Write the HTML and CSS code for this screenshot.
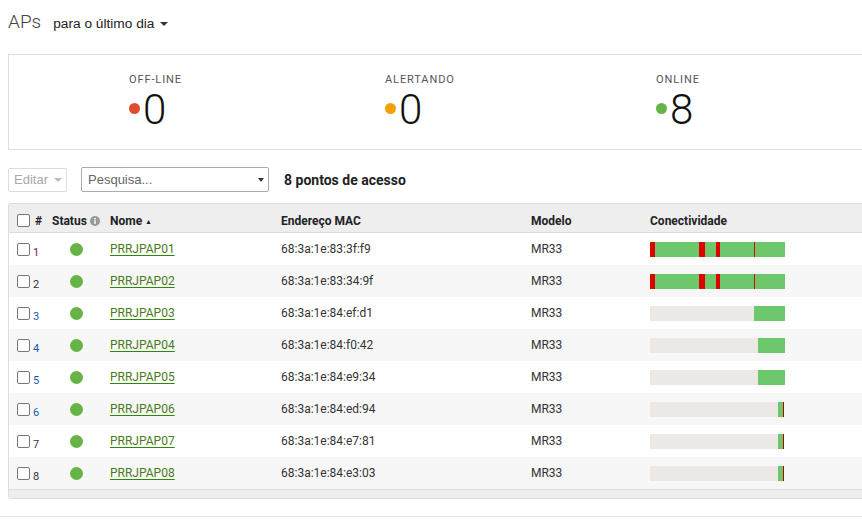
FILE: index.html
```html
<!DOCTYPE html>
<html lang="pt">
<head>
<meta charset="utf-8">
<title>APs</title>
<link rel="stylesheet" href="styles.css">
</head>
<body>
<div class="page">
  <header class="title-row">
    <h1 class="title">APs</h1>
    <div class="period">para o último dia <span class="caret"></span></div>
  </header>

  <section class="stats">
    <div class="stat stat-off">
      <div class="stat-label">OFF-LINE</div>
      <div class="stat-value"><span class="sdot red"></span>0</div>
    </div>
    <div class="stat stat-alert">
      <div class="stat-label">ALERTANDO</div>
      <div class="stat-value"><span class="sdot orange"></span>0</div>
    </div>
    <div class="stat stat-on">
      <div class="stat-label">ONLINE</div>
      <div class="stat-value"><span class="sdot green"></span>8</div>
    </div>
  </section>

  <div class="toolbar">
    <button class="btn-edit" disabled>Editar <span class="caret light"></span></button>
    <div class="search"><span class="placeholder">Pesquisa...</span><span class="caret"></span></div>
    <div class="count">8 pontos de acesso</div>
  </div>

  <div class="table">
    <div class="row head">
      <div class="c-sel"><span class="cb"></span><span class="hash">#</span></div>
      <div class="c-status">Status <svg class="info" width="10" height="10" viewBox="0 0 10 10"><circle cx="5" cy="5" r="5" fill="#999"/><rect x="4.3" y="4.2" width="1.4" height="3.8" fill="#fff"/><circle cx="5" cy="2.7" r="0.85" fill="#fff"/></svg></div>
      <div class="c-name">Nome <span class="sort">&#9650;</span></div>
      <div class="c-mac">Endereço MAC</div>
      <div class="c-model">Modelo</div>
      <div class="c-conn">Conectividade</div>
    </div>

    <div class="row">
      <div class="c-sel"><span class="cb"></span><span class="num visited">1</span></div>
      <div class="c-status"><span class="dot"></span></div>
      <div class="c-name"><a href="#">PRRJPAP01</a></div>
      <div class="c-mac">68:3a:1e:83:3f:f9</div>
      <div class="c-model">MR33</div>
      <div class="c-conn"><div class="bar"><i class="r" style="width:5px"></i><i class="g" style="width:44px"></i><i class="r" style="width:6px"></i><i class="g" style="width:11px"></i><i class="r" style="width:4px"></i><i class="g" style="width:34px"></i><i class="r" style="width:1px"></i><i class="g" style="width:30px"></i></div></div>
    </div>
    <div class="row alt">
      <div class="c-sel"><span class="cb"></span><span class="num">2</span></div>
      <div class="c-status"><span class="dot"></span></div>
      <div class="c-name"><a href="#">PRRJPAP02</a></div>
      <div class="c-mac">68:3a:1e:83:34:9f</div>
      <div class="c-model">MR33</div>
      <div class="c-conn"><div class="bar"><i class="r" style="width:5px"></i><i class="g" style="width:44px"></i><i class="r" style="width:6px"></i><i class="g" style="width:11px"></i><i class="r" style="width:4px"></i><i class="g" style="width:34px"></i><i class="r" style="width:1px"></i><i class="g" style="width:30px"></i></div></div>
    </div>
    <div class="row">
      <div class="c-sel"><span class="cb"></span><span class="num link">3</span></div>
      <div class="c-status"><span class="dot"></span></div>
      <div class="c-name"><a href="#">PRRJPAP03</a></div>
      <div class="c-mac">68:3a:1e:84:ef:d1</div>
      <div class="c-model">MR33</div>
      <div class="c-conn"><div class="bar"><i class="e" style="width:104px"></i><i class="g" style="width:31px"></i></div></div>
    </div>
    <div class="row alt">
      <div class="c-sel"><span class="cb"></span><span class="num link">4</span></div>
      <div class="c-status"><span class="dot"></span></div>
      <div class="c-name"><a href="#">PRRJPAP04</a></div>
      <div class="c-mac">68:3a:1e:84:f0:42</div>
      <div class="c-model">MR33</div>
      <div class="c-conn"><div class="bar"><i class="e" style="width:108px"></i><i class="g" style="width:27px"></i></div></div>
    </div>
    <div class="row">
      <div class="c-sel"><span class="cb"></span><span class="num link">5</span></div>
      <div class="c-status"><span class="dot"></span></div>
      <div class="c-name"><a href="#">PRRJPAP05</a></div>
      <div class="c-mac">68:3a:1e:84:e9:34</div>
      <div class="c-model">MR33</div>
      <div class="c-conn"><div class="bar"><i class="e" style="width:108px"></i><i class="g" style="width:27px"></i></div></div>
    </div>
    <div class="row alt">
      <div class="c-sel"><span class="cb"></span><span class="num link">6</span></div>
      <div class="c-status"><span class="dot"></span></div>
      <div class="c-name"><a href="#">PRRJPAP06</a></div>
      <div class="c-mac">68:3a:1e:84:ed:94</div>
      <div class="c-model">MR33</div>
      <div class="c-conn"><div class="bar"><i class="e" style="width:128px"></i><i class="g" style="width:5px"></i><i class="d" style="width:1px"></i></div></div>
    </div>
    <div class="row">
      <div class="c-sel"><span class="cb"></span><span class="num">7</span></div>
      <div class="c-status"><span class="dot"></span></div>
      <div class="c-name"><a href="#">PRRJPAP07</a></div>
      <div class="c-mac">68:3a:1e:84:e7:81</div>
      <div class="c-model">MR33</div>
      <div class="c-conn"><div class="bar"><i class="e" style="width:128px"></i><i class="g" style="width:5px"></i><i class="d" style="width:1px"></i></div></div>
    </div>
    <div class="row alt">
      <div class="c-sel"><span class="cb"></span><span class="num">8</span></div>
      <div class="c-status"><span class="dot"></span></div>
      <div class="c-name"><a href="#">PRRJPAP08</a></div>
      <div class="c-mac">68:3a:1e:84:e3:03</div>
      <div class="c-model">MR33</div>
      <div class="c-conn"><div class="bar"><i class="e" style="width:128px"></i><i class="g" style="width:5px"></i><i class="d" style="width:1px"></i></div></div>
    </div>
    <div class="table-foot"></div>
  </div>

  <div class="bottom-line"></div>
</div>
</body>
</html>
```

FILE: styles.css
```css
html, body {
  margin: 0;
  padding: 0;
  overflow: hidden;
  background: #fff;
}
body {
  font-family: Roboto, "Liberation Sans", Arial, sans-serif;
  color: #333;
  font-size: 12px;
}
.page {
  padding: 8px 0 0 8px;
}

/* title */
.title-row {
  display: flex;
  align-items: baseline;
  height: 28px;
}
.title {
  margin: 0;
  font-size: 19px;
  font-weight: 300;
  color: #444;
  line-height: 28px;
}
.period {
  margin-left: 12px;
  font-family: "Liberation Sans", Arial, sans-serif;
  font-size: 13.7px;
  color: #222;
  display: flex;
  align-items: center;
}
.caret {
  display: inline-block;
  width: 0;
  height: 0;
  border-left: 4px solid transparent;
  border-right: 4px solid transparent;
  border-top: 4px solid #333;
  margin-left: 6px;
}
.caret.light { border-top-color: #bbb; }

/* stats */
.stats {
  margin-top: 18px;
  border: 1px solid #ddd;
  border-right: none;
  display: grid;
  grid-template-columns: 376px 271px 1fr;
  padding-top: 18px;
  box-sizing: border-box;
  height: 96px;
}
.stat-off { padding-left: 120px; }
.stat-label {
  font-size: 11px;
  line-height: 14px;
  letter-spacing: 0.9px;
  color: #555;
}
.stat-value {
  display: flex;
  align-items: center;
  margin-top: 2px;
  font-size: 42px;
  font-weight: 300;
  line-height: 42px;
  color: #111;
}
.sdot {
  width: 11px;
  height: 11px;
  border-radius: 50%;
  margin-right: 3px;
  margin-bottom: 3px;
}
.sdot.red { background: #e14b2e; }
.sdot.orange { background: #f2a200; }
.sdot.green { background: #68b347; }

/* toolbar */
.toolbar {
  display: flex;
  align-items: center;
  margin-top: 17px;
  height: 25px;
}
.btn-edit {
  width: 59px;
  height: 24px;
  border: 1px solid #ddd;
  border-radius: 2px;
  background: #fff;
  font-family: "Liberation Sans", Arial, sans-serif;
  font-size: 13px;
  color: #aaa;
  padding: 0 0 0 5px;
  text-align: left;
  display: flex;
  align-items: center;
}
.search {
  margin-left: 14px;
  width: 188px;
  height: 25px;
  box-sizing: border-box;
  border: 1px solid #aaa;
  border-radius: 2px;
  display: flex;
  align-items: center;
  justify-content: space-between;
  padding: 0 4px 0 6px;
}
.placeholder {
  font-family: "Liberation Sans", Arial, sans-serif;
  font-size: 13px;
  color: #666;
}
.search .caret { border-top-color: #333; border-width: 4px 3.5px 0; }
.count {
  margin-left: 15px;
  font-size: 14px;
  font-weight: 700;
  color: #222;
}

/* table */
.table {
  margin-top: 11px;
  border: 1px solid #ddd;
  border-right: none;
  border-radius: 3px 0 0 3px;
  overflow: hidden;
}
.row {
  display: grid;
  grid-template-columns: 43px 58px 171px 250px 119px 1fr;
  height: 32px;
  align-items: center;
  background: #fff;
  font-size: 12px;
  color: #333;
}
.row.alt { background: #f7f7f7; }
.row.head {
  box-sizing: border-box;
  height: 29px;
  background: #eee;
  border-bottom: 1px solid #ddd;
  font-weight: 700;
  color: #222;
  padding-top: 5px;
}
.c-sel {
  padding-left: 8px;
  display: flex;
  align-items: center;
}
.cb {
  width: 11px;
  height: 11px;
  border: 1px solid #777;
  border-radius: 2px;
  background: #fff;
  display: inline-block;
}
.hash { margin-left: 5px; font-weight: 700; }
.num {
  margin-left: 3px;
  margin-top: 6px;
  font-size: 11px;
  color: #333;
}
.num.visited { color: #6a1b62; }
.num.link { color: #1c58b0; }
.c-status {
  display: flex;
  align-items: center;
}
.info { margin-left: 3px; }
.dot {
  width: 13px;
  height: 13px;
  border-radius: 50%;
  background: #68b347;
  margin-left: 18px;
}
.sort { font-size: 7px; vertical-align: 1px; }
.c-name a {
  color: #477b1c;
  text-decoration: underline;
  text-decoration-color: #2a8a00;
  text-underline-offset: 2px;
}
.bar {
  display: flex;
  height: 15px;
  width: 135px;
}
.bar i { display: block; height: 15px; }
.bar .r { background: #e00000; }
.bar .g { background: #6cc76d; }
.bar .e { background: #ece8e6; }
.bar .d { background: #b00000; }
.table-foot {
  height: 8px;
  background: #eee;
  border-top: 1px solid #ddd;
}
.bottom-line {
  margin-top: 17px;
  margin-left: -8px;
  border-top: 1px solid #e5e5e5;
}
```
